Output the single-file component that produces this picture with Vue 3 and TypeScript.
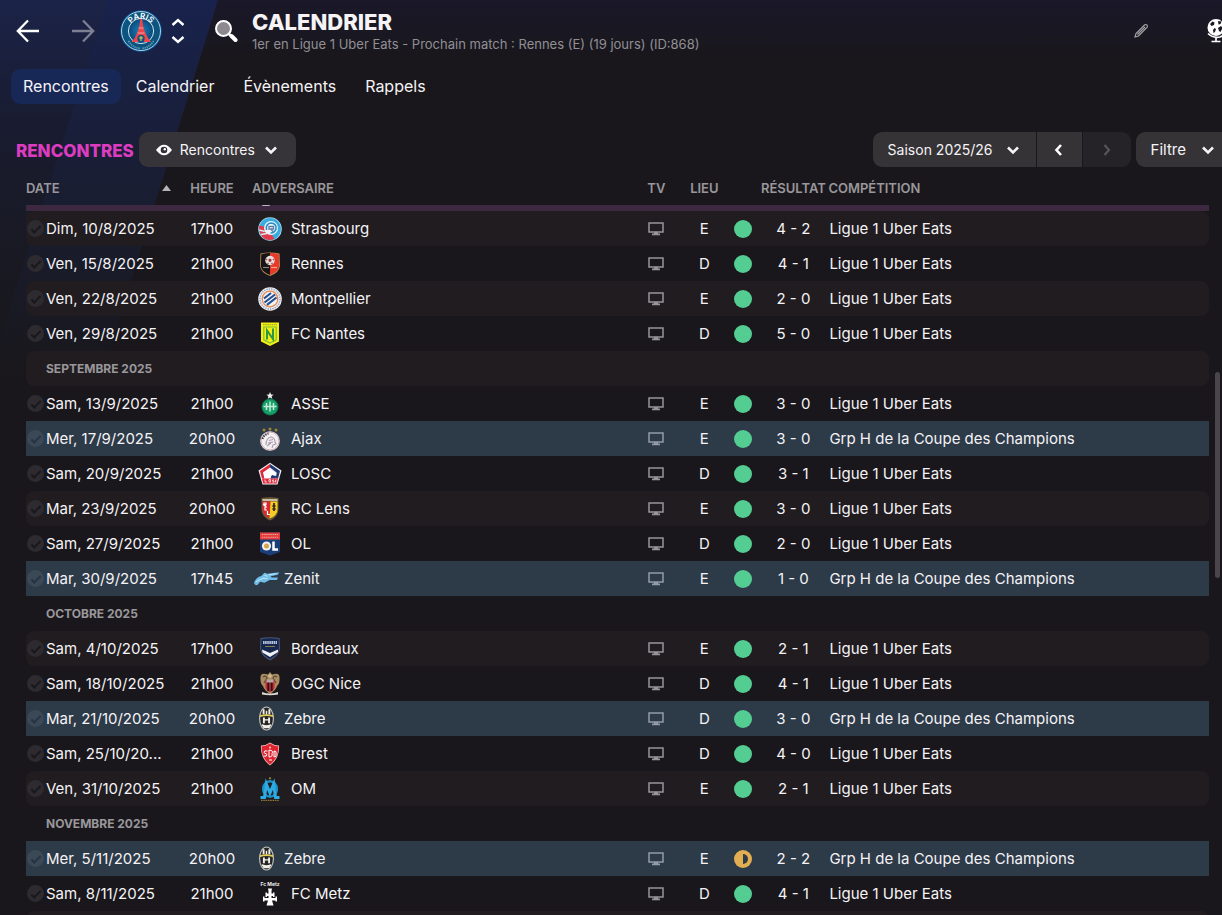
<script setup lang="ts">
interface Match {
  date: string
  time: string
  team: string
  crest: string
  venue: 'E' | 'D'
  score: string
  cup?: boolean
  compact?: boolean
  draw?: boolean
}

interface Month {
  month: string
}

type Row = Match | Month

const LEAGUE = 'Ligue 1 Uber Eats'
const CUP = 'Grp H de la Coupe des Champions'

const tabs = ['Rencontres', 'Calendrier', 'Évènements', 'Rappels']

const rows: Row[] = [
  { date: 'Dim, 10/8/2025', time: '17h00', team: 'Strasbourg', crest: 'strasbourg', venue: 'E', score: '4 - 2' },
  { date: 'Ven, 15/8/2025', time: '21h00', team: 'Rennes', crest: 'rennes', venue: 'D', score: '4 - 1' },
  { date: 'Ven, 22/8/2025', time: '21h00', team: 'Montpellier', crest: 'montpellier', venue: 'E', score: '2 - 0' },
  { date: 'Ven, 29/8/2025', time: '21h00', team: 'FC Nantes', crest: 'nantes', venue: 'D', score: '5 - 0' },
  { month: 'SEPTEMBRE 2025' },
  { date: 'Sam, 13/9/2025', time: '21h00', team: 'ASSE', crest: 'asse', venue: 'E', score: '3 - 0' },
  { date: 'Mer, 17/9/2025', time: '20h00', team: 'Ajax', crest: 'ajax', venue: 'E', score: '3 - 0', cup: true },
  { date: 'Sam, 20/9/2025', time: '21h00', team: 'LOSC', crest: 'losc', venue: 'D', score: '3 - 1' },
  { date: 'Mar, 23/9/2025', time: '20h00', team: 'RC Lens', crest: 'lens', venue: 'E', score: '3 - 0' },
  { date: 'Sam, 27/9/2025', time: '21h00', team: 'OL', crest: 'ol', venue: 'D', score: '2 - 0' },
  { date: 'Mar, 30/9/2025', time: '17h45', team: 'Zenit', crest: 'zenit', venue: 'E', score: '1 - 0', cup: true, compact: true },
  { month: 'OCTOBRE 2025' },
  { date: 'Sam, 4/10/2025', time: '17h00', team: 'Bordeaux', crest: 'bordeaux', venue: 'E', score: '2 - 1' },
  { date: 'Sam, 18/10/2025', time: '21h00', team: 'OGC Nice', crest: 'nice', venue: 'D', score: '4 - 1' },
  { date: 'Mar, 21/10/2025', time: '20h00', team: 'Zebre', crest: 'zebre', venue: 'D', score: '3 - 0', cup: true, compact: true },
  { date: 'Sam, 25/10/20...', time: '21h00', team: 'Brest', crest: 'brest', venue: 'D', score: '4 - 0' },
  { date: 'Ven, 31/10/2025', time: '21h00', team: 'OM', crest: 'om', venue: 'E', score: '2 - 1' },
  { month: 'NOVEMBRE 2025' },
  { date: 'Mer, 5/11/2025', time: '20h00', team: 'Zebre', crest: 'zebre', venue: 'E', score: '2 - 2', cup: true, compact: true, draw: true },
  { date: 'Sam, 8/11/2025', time: '21h00', team: 'FC Metz', crest: 'metz', venue: 'D', score: '4 - 1' },
  { month: '' },
]

const isMonth = (row: Row): row is Month => 'month' in row
</script>

<template>
  <div class="page">
    <svg class="sprite" aria-hidden="true">
      <defs>
        <symbol id="crest-strasbourg" viewBox="0 0 24 24">
          <circle cx="12" cy="12" r="11.8" fill="#a9d9ee" />
          <circle cx="12" cy="12" r="10.9" fill="#38acdf" />
          <path d="M1.300 8.500L8 10L14 18L16.500 22Q9 25 4 19.500Q.5 15 1.300 8.500Z" fill="#e23c4c" />
          <path d="M1.200 13l5.500 1.500M3 17.500l6-1" stroke="#d9e9f3" stroke-width="1.300" />
          <circle cx="13" cy="11" r="7" fill="#eef5fa" />
          <path d="M8.500 13Q7.500 6.500 13 6Q18.500 6.500 18 11.500Q17 16 12.500 16" fill="none" stroke="#2a8fc9" stroke-width="1.600" />
          <path d="M11 13V9.500h4.500v2.500h-3l3 3" fill="none" stroke="#5d7fa6" stroke-width="1.300" />
        </symbol>
        <symbol id="crest-rennes" viewBox="0 0 24 24">
          <path d="M2.500 1.500Q12-.5 21.500 1.500L22 14Q21 21 12 24Q3 21 2 14Z" fill="#b98c4e" />
          <path d="M3.300 2.300Q8 1.100 12 1.100V23Q3.700 20 2.800 14Z" fill="#161416" />
          <path d="M12 1.100Q16 1.100 20.700 2.300L21.200 14Q20.300 20 12 23Z" fill="#e8392b" />
          <circle cx="12" cy="8.500" r="4.700" fill="#e6dedd" />
          <path d="M12 6.500l1.700 1.300-.7 2h-2l-.7-2Z" fill="#9c3838" />
          <path d="M8 7l1 1M16 7l-1 1M9.500 12l1-1M14.500 12l-1-1" stroke="#9c5050" stroke-width="1.300" />
          <path d="M5 15.500h6" stroke="#8b7f7f" stroke-width="1.200" /><path d="M13 15.500h6" stroke="#f2a08e" stroke-width="1.200" />
        </symbol>
        <symbol id="crest-montpellier" viewBox="0 0 24 24">
          <circle cx="12" cy="12" r="11.800" fill="#eceef2" />
          <circle cx="12" cy="12" r="10" fill="none" stroke="#8797b4" stroke-width="1.400" stroke-dasharray="1.200 1.200" />
          <circle cx="12" cy="12" r="7.800" fill="#f4f4f4" stroke="#e98a4e" stroke-width="1.300" />
          <path d="M6 11.500L13 6M6.500 15.500L17 7.500M9 17.800L18.500 10.500" stroke="#1f4f94" stroke-width="2.200" />
        </symbol>
        <symbol id="crest-nantes" viewBox="0 0 24 24">
          <path d="M3 .5H21V19.500L12 24L3 19.500Z" fill="#f4ee12" />
          <path d="M5.800 5H18.200V17.800L12 21L5.800 17.800Z" fill="none" stroke="#7cc23d" stroke-width="1.200" />
          <path d="M9 17.500V8.500L15 17V6.500" fill="none" stroke="#2d9744" stroke-width="2" />
          <path d="M5 2.700h14" stroke="#9eb52a" stroke-width="1.300" stroke-dasharray="1.500 .7" />
        </symbol>
        <symbol id="crest-asse" viewBox="0 0 24 24">
          <circle cx="12" cy="15" r="8.500" fill="#0b7650" /><circle cx="12" cy="15" r="7.500" fill="#18a068" />
          <path d="M12 0l1 2.500 2.600.2-2 1.600.7 2.500-2.300-1.300-2.300 1.300.7-2.500-2-1.600 2.600-.2Z" fill="#f1f3f2" />
          <path d="M8.500 11v7M12 9.500v10M15.500 11v7M5.500 14.500h13" stroke="#c4ecd9" stroke-width="1.500" />
        </symbol>
        <symbol id="crest-ajax" viewBox="0 0 24 24">
          <circle cx="6" cy="3" r="1.500" fill="#9e8638" /><circle cx="12" cy="2" r="1.500" fill="#9e8638" /><circle cx="18" cy="3" r="1.500" fill="#9e8638" />
          <circle cx="12" cy="14" r="9.800" fill="#f1eff1" />
          <circle cx="12" cy="14" r="9" fill="none" stroke="#c58d98" stroke-width=".7" />
          <path d="M4.500 12q1-4 6-5.500" fill="none" stroke="#454045" stroke-width="2" stroke-dasharray="1.500 1" />
          <path d="M8 18q0-7 5-8q4 1 4 5l1 2-3 1-1 3M9 19l4-3M11 13.500l4-1M10 16l5-1" fill="none" stroke="#a99ca8" stroke-width="1.100" />
        </symbol>
        <symbol id="crest-losc" viewBox="0 0 24 24">
          <path d="M12 .8L23.500 8.500L19.500 22.500H4.500L.5 8.500Z" fill="#f0eef3" />
          <path d="M12 2L2 9l2 7.500h2.500L5 10.500l7-5Z" fill="#e0283c" /><path d="M12 2L22 9l-2 7.500h-2.500L19 10.500l-7-5Z" fill="#20376f" />
          <path d="M12 5.500L19 10.500L18 14l-4-1-2 3.500H17.500L19 11" fill="#20376f" />
          <path d="M6.500 16.500L5.500 10.500L10.500 7L13 8L18 11.500L16.500 13.500L13 12.500L12.500 16.500Z" fill="#fff" />
          <path d="M4 16.500H20l-1.200 5H5.200Z" fill="#e12b3d" />
          <path d="M7 17.500v2.500h2M11 17.500h1.500v2.500h-1.500zM16 18h-1.500v1h1.500v1.200h-1.500M18.500 18h-1v2h1" fill="none" stroke="#f6d7da" stroke-width=".9" />
        </symbol>
        <symbol id="crest-lens" viewBox="0 0 24 24">
          <path d="M3.500 1Q12-.5 20.500 1V13Q20 20 12 23.500Q4 20 3.500 13Z" fill="#6d5b36" />
          <path d="M4.500 2h15v2h-15z" fill="#c7bda4" />
          <path d="M4.500 4.500h8l-1 17Q5 18 4.500 12Z" fill="#dc2830" /><path d="M12.500 4.500h7V12q0 7-8 9.500Z" fill="#f5cc22" />
          <path d="M6 9V6h2v1.500H6l2 2M9 10H7v3h2M9.500 14v3.500H12" fill="none" stroke="#fff" stroke-width="1.200" />
          <path d="M16 6v8M14.500 9h3M14.500 12h3" stroke="#3a2e20" stroke-width="1.800" />
        </symbol>
        <symbol id="crest-ol" viewBox="0 0 24 24">
          <path d="M2 .5H22V20L12 23.500L2 20Z" fill="#1c3e78" /><path d="M2 .5H22V7.500H2Z" fill="#e43e3c" />
          <path d="M4 2.500h16M4 5.300h16" stroke="#f4a29a" stroke-width="1" stroke-dasharray="1.400 .7" />
          <circle cx="8.500" cy="14" r="4.600" fill="#f0f0f0" /><circle cx="8.500" cy="14" r="2.500" fill="#d6a448" />
          <path d="M15.500 9.500V17.500H20" fill="none" stroke="#fff" stroke-width="2.500" />
        </symbol>
        <symbol id="crest-zenit" viewBox="0 0 24 24">
          <path d="M0 16Q2 10.500 7 9.500L10 6.500L13 7.500L24 6L23 8.500L16 9.800L17 11H23L22 13.500H15L10 16L6 15L3 18.500L1 18Z" fill="#6fbde8" />
          <path d="M2 15l7-3.500 4 1M10 8.500l3 1.500M14 8.500l7-1" fill="none" stroke="#c2e6f8" stroke-width="1" />
        </symbol>
        <symbol id="crest-bordeaux" viewBox="0 0 24 24">
          <path d="M2.500 1Q12-.5 21.500 1L22 12Q20 20 12 23.500Q4 20 2 12Z" fill="#46557c" />
          <path d="M3.500 2Q12 .7 20.500 2L21 12Q19 19 12 22Q5 19 3 12Z" fill="#17284f" />
          <path d="M5 5.500h14" stroke="#b3c0da" stroke-width="3" stroke-dasharray="1.600 .5" />
          <path d="M7 9.500h10" stroke="#8c7b4c" />
          <path d="M4 12.500L12 16L20 12.500V15L12 20L4.500 15.500Z" fill="#f0f1f5" />
        </symbol>
        <symbol id="crest-nice" viewBox="0 0 24 24">
          <path d="M12 0l2 2.500Q22 0 21.500 6Q22 11 19 14q-1 4-7 8q-6-4-7-8Q2 11 2.500 6Q2 0 10 2.500Z" fill="#a88b61" />
          <path d="M5 5q3-2 4 1l-3 5M19 5q-3-2-4 1l3 5" fill="none" stroke="#5b4835" stroke-width="1.200" />
          <circle cx="12" cy="4" r="1.800" fill="#d2bd93" />
          <path d="M7.500 8h9v8q-1 3-4.500 4q-3.500-1-4.500-4Z" fill="#c92433" />
          <path d="M10.300 10v9M13.700 10v9" stroke="#1d1719" stroke-width="1.700" /><path d="M8.500 7.500h7v3h-7z" fill="#b3a8a0" />
          <path d="M4 20q8 3 16 0v2.500q-8 1.500-16 0Z" fill="#e2d9cf" />
        </symbol>
        <symbol id="crest-zebre" viewBox="0 0 24 26">
          <ellipse cx="12" cy="13" rx="7.800" ry="12.500" fill="#c9c7bd" /><ellipse cx="12" cy="13" rx="6.600" ry="11.500" fill="#262628" />
          <path d="M9 3.500v5M15 3.500v5M9.300 12v6M14.700 12v6" stroke="#f1efe8" stroke-width="2" />
          <path d="M12 5v4" stroke="#f1efe8" stroke-width="1.500" />
          <path d="M5 9.500Q12 7.500 19 9.500L18.700 11.500Q12 9.500 5.300 11.500Z" fill="#e5ce57" />
          <path d="M9.300 14.500h5.400M7.500 19.500Q12 22 16.500 19.500L14.500 22.500H9.500Z" fill="#f1efe8" stroke="#f1efe8" stroke-width="1.400" />
        </symbol>
        <symbol id="crest-brest" viewBox="0 0 24 24">
          <path d="M3 3.500Q8 3.500 12 .5Q16 3.500 21 3.500Q22 16 12 23.500Q2 16 3 3.500Z" fill="#f3b5b8" />
          <path d="M3.800 4.300Q8 4.300 12 1.600Q16 4.300 20.200 4.300Q21 15.500 12 22.500Q3 15.500 3.800 4.300Z" fill="#de2631" />
          <path d="M9.500 9Q6 8 6 10.500L9 12.500Q9 15 5.500 14M11 8v7q4 0 3-3.500q2-3-3-3.500M16 9v6q3 0 2-3q1-3-2-3M11 18h3" fill="none" stroke="#fff" stroke-width="1" />
          <circle cx="12" cy="5.500" r="1" fill="#ffd6c4" />
        </symbol>
        <symbol id="crest-om" viewBox="0 0 24 24">
          <circle cx="12" cy="1.300" r="1.100" fill="#a18841" />
          <ellipse cx="12" cy="12" rx="6.800" ry="7.800" fill="none" stroke="#1b8fc8" stroke-width="2.600" />
          <path d="M2.500 20.500H6.500L8.300 7L12 16L15.700 7L17.500 20.500H21.500" fill="none" stroke="#2eaae2" stroke-width="3" />
          <path d="M3 23.300h18" stroke="#8c7638" stroke-width="1.200" stroke-dasharray="1.600 .7" />
        </symbol>
        <symbol id="crest-metz" viewBox="0 0 24 24">
          <text x="12" y="3.800" text-anchor="middle" font-size="5" font-weight="700" font-family="Inter, sans-serif" fill="#eee">Fc Metz</text>
          <path d="M10 6.500h4l-.5 2.500v2.500H15V10.500h1.500v4.500H15V14H13.500v2H17.500V14.500h1.500v5H17.500V18.500H14l1.500 5h-7l1.500-5H6.500V19.500H5v-5H6.500V16h4V14H9V15H7.500v-4.500H9V11.500h1.500V9Z" fill="#fff" />
        </symbol>
        <symbol id="chevron" viewBox="0 0 14 14">
          <path d="M2 4.500L7 9.500L12 4.500" fill="none" stroke="currentColor" stroke-width="2.600" />
        </symbol>
      </defs>
    </svg>

    <header class="header">
      <nav class="history" aria-label="Historique">
        <button class="icon-button" aria-label="Précédent">
          <svg width="24" height="24" viewBox="0 0 24 24"><path d="M23 12H2M12 1.500L1.800 12L12 22.500" fill="none" stroke="#fff" stroke-width="2.300" /></svg>
        </button>
        <button class="icon-button" aria-label="Suivant">
          <svg width="24" height="24" viewBox="0 0 24 24"><path d="M1 12H22M12 1.500L22.200 12L12 22.500" fill="none" stroke="#7d8092" stroke-width="2.300" /></svg>
        </button>
      </nav>
      <svg class="club" width="42" height="42" viewBox="0 0 42 42" role="img" aria-label="Paris Saint-Germain">
        <defs><path id="arc" d="M8.500 18.500A12.900 12.900 0 0 1 33.500 18.500" /><radialGradient id="disc"><stop offset="0" stop-color="#1c86b8" /><stop offset="1" stop-color="#08477c" /></radialGradient></defs>
        <circle cx="21" cy="21" r="20.800" fill="#07549a" />
        <circle cx="21" cy="21" r="19.500" fill="#0d557f" stroke="#a9d2e0" stroke-width="1" />
        <circle cx="21" cy="21" r="12.600" fill="url(#disc)" stroke="#cfe3ec" stroke-width="1" />
        <text class="club-name" fill="#fff" font-size="8" font-weight="600"><textPath href="#arc" startOffset="50%" text-anchor="middle">PARIS</textPath></text>
        <path d="M20.300 9h1.700L23.500 18l2 5q2.500 6 5.500 9h-6.500q-3-7-6.500 0h-6.500q4-4 5.500-9l2-5Z" fill="#f0454a" />
        <path d="M18.500 18h5M17.500 23h7" stroke="#f5b6b8" stroke-width=".8" />
        <circle cx="21" cy="28.500" r="3.700" fill="#125480" /><path d="M21 26v5M19 28q2-1 2 2q0-3 2-2" stroke="#dbb85c" stroke-width="1.100" fill="none" />
        <path d="M8.500 31Q13 38 20 38.200M22.500 38.200Q29 38 33.500 31" fill="none" stroke="#75abc8" stroke-width="1.500" stroke-dasharray="1.200 .9" />
      </svg>
      <div class="stepper">
        <button class="icon-button" aria-label="Club précédent"><svg width="14" height="10" viewBox="0 0 14 10"><path d="M1.500 8L7 3L12.500 8" fill="none" stroke="#fff" stroke-width="2.400" /></svg></button>
        <button class="icon-button" aria-label="Club suivant"><svg width="14" height="10" viewBox="0 0 14 10"><path d="M1.500 2L7 7L12.500 2" fill="none" stroke="#fff" stroke-width="2.400" /></svg></button>
      </div>
      <button class="icon-button search" aria-label="Rechercher">
        <svg width="24" height="24" viewBox="0 0 24 24"><path d="M15 15L18 18" stroke="#fff" stroke-width="2.500" /><path d="M17.500 17L21.500 21" stroke="#fff" stroke-width="4" stroke-linecap="round" /><circle cx="9.500" cy="9.500" r="7.500" fill="#8d898f" stroke="#fff" stroke-width="2" /></svg>
      </button>
      <div class="titles">
        <h1>CALENDRIER</h1>
        <p>1er en Ligue 1 Uber Eats - Prochain match : Rennes (E) (19 jours) (ID:868)</p>
      </div>
      <button class="icon-button" aria-label="Modifier">
        <svg width="16" height="16" viewBox="0 0 16 16"><path d="M2 14L3 10.500L11.500 2Q12.800 1 14 2Q15 3.200 14 4.500L5.500 13ZM4.500 11.500L12 4" fill="none" stroke="#aaa8ad" stroke-width="1.100" /></svg>
      </button>
      <button class="icon-button globe" aria-label="Monde">
        <svg width="24" height="26" viewBox="0 0 24 26">
          <circle cx="10" cy="9.500" r="8.500" fill="#fff" />
          <path d="M4 6l2.500-2.500 2 1-.5 2.500-2.500 1zM7 12l1.500-2 1.500 1-1 3-1.500 1zM12 3l3.500.5-1 2.500-2 .5zM12 10l3-2 1.500 2-2 4-1.500-1z" fill="#1a1820" />
          <path d="M2 15.500Q7 20.500 14 19Q20 17 20 10M10 19v4M5.500 23.500h9" fill="none" stroke="#fff" stroke-width="1.700" />
        </svg>
      </button>
    </header>

    <nav class="tabs" aria-label="Sections">
      <a v-for="(tab, i) in tabs" :key="tab" href="#" :class="{ active: i === 0 }">{{ tab }}</a>
    </nav>

    <section class="toolbar">
      <h2>RENCONTRES</h2>
      <label class="picker view">
        <svg width="16" height="12" viewBox="0 0 16 12"><path d="M0 6Q8-4.500 16 6Q8 16.500 0 6Z" fill="#fff" /><circle cx="8" cy="6" r="3.300" fill="#343136" /><circle cx="8.800" cy="5.300" r="1.200" fill="#fff" /></svg>
        <select aria-label="Vue"><option>Rencontres</option></select>
        <svg width="14" height="14"><use href="#chevron" /></svg>
      </label>
      <div class="season">
        <label class="picker">
          <select aria-label="Saison"><option>Saison 2025/26</option></select>
          <svg width="14" height="14"><use href="#chevron" /></svg>
        </label>
        <button class="step" aria-label="Saison précédente"><svg width="14" height="14" viewBox="0 0 14 14"><path d="M9 2L4.500 7L9 12" fill="none" stroke="#fff" stroke-width="2.600" /></svg></button>
        <button class="step last" disabled aria-label="Saison suivante"><svg width="14" height="14" viewBox="0 0 14 14"><path d="M4.500 2L9 7L4.500 12" fill="none" stroke="#57545a" stroke-width="2.200" /></svg></button>
      </div>
      <button class="filter">Filtre <svg width="14" height="14"><use href="#chevron" /></svg></button>
    </section>

    <main class="list">
      <table>
        <colgroup>
          <col class="c-date"><col class="c-time"><col class="c-team"><col class="c-tv"><col class="c-venue"><col class="c-dot"><col class="c-score"><col>
        </colgroup>
        <thead>
          <tr>
            <th scope="col"><span class="sort">DATE <svg width="9" height="6" viewBox="0 0 9 6"><path d="M0 6L4.500 0L9 6Z" fill="#b5b3b7" /></svg></span></th>
            <th scope="col" class="center">HEURE</th>
            <th scope="col" class="team-head">ADVERSAIRE</th>
            <th scope="col" class="center">TV</th>
            <th scope="col" class="center">LIEU</th>
            <td></td>
            <th scope="col" class="center">RÉSULTAT</th>
            <th scope="col">COMPÉTITION</th>
          </tr>
          <tr class="divider"><td colspan="8"></td></tr>
        </thead>
        <tbody>
          <template v-for="(row, i) in rows" :key="i">
            <tr v-if="isMonth(row)" class="month">
              <th colspan="8" scope="rowgroup">{{ row.month }}</th>
            </tr>
            <tr v-else :class="{ cup: row.cup }">
              <td><span class="date"><input type="checkbox" :aria-label="row.date">{{ row.date }}</span></td>
              <td class="center">{{ row.time }}</td>
              <td>
                <span class="team" :class="{ compact: row.compact }">
                  <svg class="crest" aria-hidden="true"><use :href="`#crest-${row.crest}`" /></svg>{{ row.team }}
                </span>
              </td>
              <td>
                <svg class="tv" width="16" height="14" viewBox="0 0 16 14"><path d="M1 1H15V10H1Z" fill="none" stroke="currentColor" stroke-width="1.500" /><path d="M6 10h4v1.500h2V13.300H4V11.500h2Z" fill="currentColor" /></svg>
              </td>
              <td class="center">{{ row.venue }}</td>
              <td>
                <svg class="dot" width="18" height="18" viewBox="0 0 18 18">
                  <circle cx="9" cy="9" r="9" :fill="row.draw ? '#e2ae52' : '#54cd92'" />
                  <path v-if="row.draw" d="M9 4A5 5 0 0 1 9 14Z" fill="#2d3a48" />
                </svg>
              </td>
              <td class="center">{{ row.score }}</td>
              <td class="competition">{{ row.cup ? CUP : LEAGUE }}</td>
            </tr>
          </template>
        </tbody>
      </table>
      <div class="scrollbar"></div>
    </main>
  </div>
</template>

<style>
body {
  margin: 0;
  background: #19171b;
}
</style>

<style scoped>
.page {
  position: relative;
  isolation: isolate;
  height: 100vh;
  overflow: hidden;
  background: linear-gradient(#1a1829 0, #19171b 60px);
  color: #f5f3f6;
  font: 15px/20px Inter, "Liberation Sans", sans-serif;
}

.page::before,
.page::after {
  content: "";
  position: absolute;
  z-index: -1;
  inset: 0 auto auto 0;
  height: 420px;
}

.page::before {
  width: 218px;
  background: linear-gradient(#18224c, #19203e 100px, #191d30 210px, #19171b 380px);
  clip-path: polygon(0 0, 100% 0, 88px 100%, 0 100%);
}

.page::after {
  width: 108px;
  background: linear-gradient(#1b2348, #191c31 120px, #191a26 220px, #19171b 360px);
  clip-path: polygon(0 0, 100% 0, 0 338px);
}

.sprite {
  position: absolute;
  width: 0;
  height: 0;
}

button,
select {
  border: 0;
  padding: 0;
  background: none;
  color: inherit;
  font: inherit;
}

svg {
  flex: none;
}

.icon-button {
  display: flex;
}

.header {
  display: flex;
  align-items: center;
  height: 61px;
  margin-right: -8px;
  padding-left: 16px;
}

.history {
  display: flex;
  gap: 31px;
  margin-right: 25px;
}

.club-name {
  font-family: Inter, sans-serif;
}

.stepper {
  display: grid;
  gap: 8px;
  margin: 0 29px 0 9px;
}

.search {
  margin-right: 14px;
}

.titles {
  flex: 1;
  min-width: 0;
}

h1 {
  margin: 0;
  font-size: 22px;
  font-weight: 800;
  line-height: 26px;
}

.titles p {
  margin: 0;
  color: #918f94;
  font-size: 13px;
  line-height: 18px;
}

.globe {
  margin-left: 57px;
}

.tabs {
  display: flex;
  gap: 1px;
  margin: 8px 11px 0;
  font-size: 16px;
}

.tabs a {
  padding: 0 14px;
  border-radius: 9px;
  color: inherit;
  line-height: 35px;
  text-decoration: none;
}

.tabs .active {
  padding: 0 12px;
  background: #182856;
}

.toolbar {
  display: flex;
  align-items: center;
  height: 35px;
  margin: 28px -8px 0 16px;
}

h2 {
  margin: 2px 5px 0 0;
  color: #dd3cc0;
  font-size: 17px;
  font-weight: 800;
  line-height: 24px;
}

.picker,
.step,
.filter {
  display: flex;
  align-items: center;
  height: 35px;
  background: #363337;
}

.picker select {
  appearance: none;
  outline: 0;
}

.view {
  gap: 8px;
  padding: 0 18px 0 17px;
  border-radius: 9px;
  background: #363438;
  font-size: 14px;
}

.season {
  display: flex;
  gap: 1px;
  margin-left: auto;
  font-size: 14px;
}

.season .picker {
  gap: 13px;
  padding: 0 16px 0 15px;
  border-radius: 9px 0 0 9px;
}

.step {
  justify-content: center;
  width: 45px;
}

.step.last {
  width: 48px;
  border-radius: 0 9px 9px 0;
  background: #252327;
}

.filter {
  gap: 15px;
  margin-left: 5px;
  padding: 0 15px;
  border-radius: 9px;
}

.list {
  display: flex;
  align-items: flex-start;
  gap: 6px;
  margin: 3px 2px 0 26px;
}

table {
  flex: 1;
  min-width: 0;
  table-layout: fixed;
  border-collapse: separate;
  border-spacing: 0;
}

.c-date { width: 156px; }
.c-time { width: 60px; }
.c-team { width: 33%; }
.c-tv { width: 48px; }
.c-venue { width: 48px; }
.c-dot { width: 30px; }
.c-score { width: 70px; }

th,
td {
  height: 35px;
  padding: 0;
  text-align: left;
  white-space: nowrap;
}

th {
  color: #99979b;
  font-size: 12px;
  font-weight: 700;
}

thead th,
thead td {
  height: 35px;
  font-size: 13px;
  font-weight: 600;
}

.center {
  text-align: center;
}

.team-head {
  padding-left: 10px;
}

.sort {
  display: flex;
  align-items: center;
  justify-content: space-between;
  padding-right: 11px;
}

.divider td {
  position: relative;
  height: 6px;
  background: #3c2840;
}

.divider td::after {
  content: "";
  position: absolute;
  top: 0;
  left: 236px;
  width: 8px;
  height: 1px;
  border-radius: 0 0 4px 4px;
  background: #b9b3bd;
}

tbody tr:nth-child(odd) > * {
  background: #201c20;
}

tbody tr:nth-child(odd) > :first-child {
  border-radius: 8px 0 0 8px;
}

tbody tr:nth-child(odd) > :last-child {
  border-radius: 0 8px 8px 0;
}

tbody tr.month:nth-child(odd) > th {
  border-radius: 8px;
}

tbody tr.cup:nth-child(n) > td {
  border-radius: 0;
  background: #2d3a48;
}

.month th {
  padding-left: 20px;
}

.date {
  display: flex;
  align-items: center;
  gap: 2px;
}

.date input {
  appearance: none;
  display: grid;
  place-items: center;
  width: 17px;
  height: 17px;
  margin: 0 0 0 1px;
  border-radius: 50%;
  background: #2d2b2f;
}

.date input::after {
  content: "";
  width: 8px;
  height: 3px;
  border: solid #19181c;
  border-width: 0 0 2px 2px;
  transform: rotate(-45deg);
}

.cup .date input {
  background: #3b4957;
}

.cup .date input::after {
  border-color: #253342;
}

.team {
  display: flex;
  align-items: center;
  gap: 9px;
  padding-left: 16px;
}

.team.compact {
  gap: 5px;
  padding-left: 12px;
}

.crest {
  width: 24px;
  height: 24px;
}

.compact .crest {
  width: 25px;
  height: 25px;
}

.tv,
.dot {
  display: block;
  margin: 0 auto;
}

.tv {
  color: #97959b;
}

.cup .tv {
  color: #929ba6;
}

.competition {
  padding-left: 1px;
}

.scrollbar {
  width: 5px;
  height: 206px;
  margin-top: 202px;
  border-radius: 3px;
  background: #49454b;
}
</style>
